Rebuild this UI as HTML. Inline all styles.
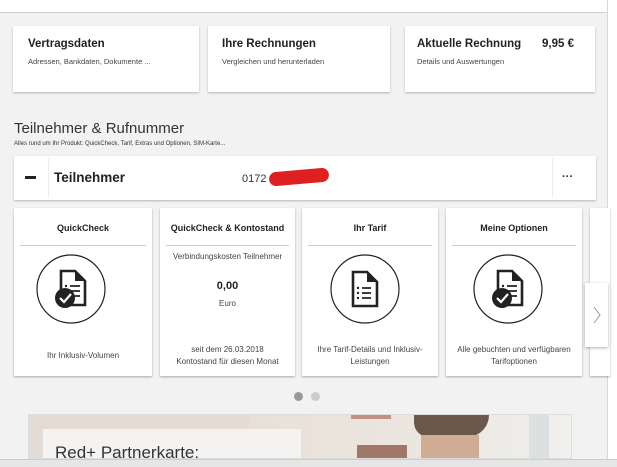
<!DOCTYPE html>
<html><head><meta charset="utf-8"><style>
*{margin:0;padding:0;box-sizing:border-box}
body{width:617px;height:467px;background:#fff;font-family:"Liberation Sans",sans-serif;color:#333;position:relative;overflow:hidden}
.a{position:absolute}
.page{left:0;top:0;width:608px;height:459px;background:#f2f2f2;border-right:1px solid #d8d8d8}
.card{background:#fff;box-shadow:0 1px 2px rgba(0,0,0,.25)}
.t{font-weight:bold;font-size:11.5px;color:#222}
.s{font-size:7.5px;color:#444}
.tile{background:#fff;box-shadow:0 1px 2px rgba(0,0,0,.3);top:208px;height:168px;text-align:center}
.tile .h{font-weight:bold;font-size:9px;color:#222;margin-top:15px;height:22px}
.tile .ln{height:1px;background:#ccc;margin:0 6px}
.tile .b{position:absolute;left:0;right:0;font-size:8px;color:#444;line-height:12px}
</style></head><body>
<div class="a page"></div>
<div class="a" style="left:0;top:0;width:607px;height:13px;background:#fff;border-bottom:1px solid #d0d0d0"></div>

<div class="a card" style="left:13px;top:26px;width:186px;height:66px"><div class="a t" style="left:15px;top:12px">Vertragsdaten</div><div class="a s" style="left:15px;top:31px">Adressen, Bankdaten, Dokumente ...</div></div>
<div class="a card" style="left:208px;top:26px;width:182px;height:66px"><div class="a t" style="left:14px;top:12px">Ihre Rechnungen</div><div class="a s" style="left:14px;top:31px">Vergleichen und herunterladen</div></div>
<div class="a card" style="left:405px;top:26px;width:190px;height:66px"><div class="a t" style="left:12px;top:12px">Aktuelle Rechnung</div><div class="a t" style="left:137px;top:12px">9,95 €</div><div class="a s" style="left:12px;top:31px">Details und Auswertungen</div></div>

<div class="a" style="left:14px;top:120px;font-size:15px;color:#333">Teilnehmer &amp; Rufnummer</div>
<div class="a" style="left:14px;top:141px;font-size:6px;color:#333">Alles rund um Ihr Produkt: QuickCheck, Tarif, Extras und Optionen, SIM-Karte...</div>

<div class="a card" style="left:14px;top:156px;width:582px;height:44px">
<div class="a" style="left:11px;top:20px;width:11px;height:3px;background:#222"></div>
<div class="a" style="left:34px;top:2px;width:1px;height:40px;background:#eee"></div>
<div class="a" style="left:40px;top:14px;font-size:13.5px;font-weight:bold;color:#222">Teilnehmer</div>
<div class="a" style="left:228px;top:17px;font-size:11px;color:#333">0172</div>
<div class="a" style="left:255px;top:14px;width:60px;height:14px;background:#e02020;border-radius:8px;transform:rotate(-5deg)"></div>
<div class="a" style="left:538px;top:2px;width:1px;height:40px;background:#eee"></div>
<div class="a" style="left:548px;top:15px;font-size:11px;font-weight:bold;color:#222">···</div>
</div>

<svg width="0" height="0" style="position:absolute"><defs>
<g id="doc"><path d="M-12,-17 h14 l10,10 v24 h-24 z" fill="none" stroke="#222" stroke-width="2.6"/><path d="M2,-17 v10 h10 z" fill="#222"/></g>
<g id="chk"><circle cx="-8" cy="10" r="10" fill="#222"/><path d="M-13,10 l4,4 l7,-8" stroke="#fff" stroke-width="2.2" fill="none"/></g>
</defs></svg>

<div class="a tile" style="left:14px;width:138px"><div class="h">QuickCheck</div><div class="ln"></div>
<svg class="a" style="left:21px;top:45px" width="72" height="72"><circle cx="36" cy="36" r="34" fill="none" stroke="#222" stroke-width="1.2"/><g transform="translate(38,35)"><use href="#doc"/><path d="M-3,-2h10M-3,3h10M-3,8h10" stroke="#222" stroke-width="1.8"/><circle cx="-7" cy="-2" r="1.2" fill="#222"/><use href="#chk"/></g></svg>
<div class="b" style="top:142px">Ihr Inklusiv-Volumen</div></div>

<div class="a tile" style="left:160px;width:135px"><div class="h">QuickCheck &amp; Kontostand</div><div class="ln"></div>
<div class="b" style="top:43px">Verbindungskosten Teilnehmer</div>
<div class="b" style="top:72px;font-size:11px;font-weight:bold;color:#222">0,00</div>
<div class="b" style="top:90px">Euro</div>
<div class="b" style="top:136px">seit dem 26.03.2018<br>Kontostand für diesen Monat</div></div>

<div class="a tile" style="left:302px;width:136px"><div class="h">Ihr Tarif</div><div class="ln"></div>
<svg class="a" style="left:27px;top:45px" width="72" height="72"><circle cx="36" cy="36" r="34" fill="none" stroke="#222" stroke-width="1.2"/><g transform="translate(36,36)"><use href="#doc"/><path d="M-3,-1h9M-3,4h9M-3,9h9" stroke="#222" stroke-width="1.8"/><circle cx="-7" cy="-1" r="1.2" fill="#222"/><circle cx="-7" cy="4" r="1.2" fill="#222"/><circle cx="-7" cy="9" r="1.2" fill="#222"/></g></svg>
<div class="b" style="top:136px">Ihre Tarif-Details und Inklusiv-<br>Leistungen</div></div>

<div class="a tile" style="left:446px;width:136px"><div class="h">Meine Optionen</div><div class="ln"></div>
<svg class="a" style="left:26px;top:45px" width="72" height="72"><circle cx="36" cy="36" r="34" fill="none" stroke="#222" stroke-width="1.2"/><g transform="translate(38,35)"><use href="#doc"/><path d="M-3,-2h10M-3,3h10M-3,8h10" stroke="#222" stroke-width="1.8"/><circle cx="-7" cy="-2" r="1.2" fill="#222"/><use href="#chk"/></g></svg>
<div class="b" style="top:136px">Alle gebuchten und verfügbaren<br>Tarifoptionen</div></div>

<div class="a tile" style="left:590px;width:20px"></div>
<div class="a" style="left:585px;top:283px;width:23px;height:64px;background:#fff;box-shadow:0 1px 3px rgba(0,0,0,.3)"><svg width="23" height="64"><path d="M9,24 l6,8 l-6,8" fill="none" stroke="#999" stroke-width="1"/></svg></div>

<div class="a" style="left:294px;top:392px;width:9px;height:9px;border-radius:50%;background:#999"></div>
<div class="a" style="left:311px;top:392px;width:9px;height:9px;border-radius:50%;background:#ccc"></div>

<div class="a" style="left:28px;top:414px;width:544px;height:45px;background:#e4dcd4;overflow:hidden;border:1px solid #ddd">
<div class="a" style="left:220px;top:0;width:324px;height:45px;background:linear-gradient(90deg,#e8e0d8,#ece6e0 50%,#f0f0ee)"></div>
<div class="a" style="left:322px;top:0;width:40px;height:4px;background:#c09080"></div>
<div class="a" style="left:328px;top:30px;width:50px;height:15px;background:#a07868"></div>
<div class="a" style="left:385px;top:0;width:75px;height:22px;background:#6a584a;border-radius:0 0 30px 20px"></div>
<div class="a" style="left:392px;top:20px;width:58px;height:25px;background:#d0ac94"></div>
<div class="a" style="left:500px;top:0;width:20px;height:45px;background:#dde0e0"></div>
<div class="a" style="left:14px;top:14px;width:258px;height:31px;background:#f5f3f1"></div>
<div class="a" style="left:26px;top:28px;font-size:17px;color:#333">Red+ Partnerkarte:</div>
</div>
<div class="a" style="left:0;top:459px;width:617px;height:8px;background:#e6e6e6;border-top:1px solid #ccc"></div>
</body></html>
